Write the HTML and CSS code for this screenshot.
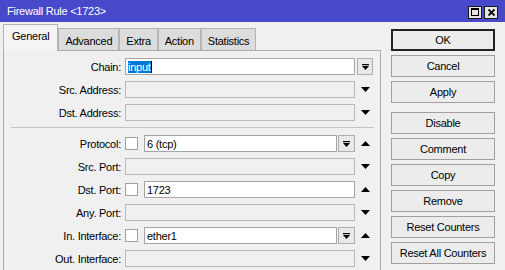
FILE: index.html
```html
<!DOCTYPE html>
<html>
<head>
<meta charset="utf-8">
<link rel="stylesheet" href="styles.css">
</head>
<body>
<div class="window">
  <div class="titlebar">
    <span class="title">Firewall Rule &lt;1723&gt;</span>
    <div class="tb-buttons">
      <span class="tb-btn"><span class="max-icon"></span></span>
      <span class="tb-btn">
        <svg width="7" height="7" viewBox="0 0 7 7"><path d="M0.5 0.5 L6.5 6.5 M6.5 0.5 L0.5 6.5" stroke="#000" stroke-width="1.8"/></svg>
      </span>
    </div>
  </div>
  <div class="content">
    <div class="left">
      <div class="tabs">
        <div class="tab active">General</div>
        <div class="tab">Advanced</div>
        <div class="tab">Extra</div>
        <div class="tab">Action</div>
        <div class="tab">Statistics</div>
      </div>
      <div class="panel">
        <div class="row">
          <span class="label">Chain:</span>
          <div class="ctrl"><div class="field"><span class="sel">input</span><span class="caret"></span></div></div>
          <div class="side"><span class="ddbtn side-dd"><svg width="7" height="6" viewBox="0 0 7 6"><rect x="0" y="0" width="7" height="1.2" fill="#000"/><path d="M0 2 H7 L3.5 6 Z" fill="#000"/></svg></span></div>
        </div>
        <div class="row">
          <span class="label">Src. Address:</span>
          <div class="ctrl"><div class="field empty"></div></div>
          <div class="side"><svg width="9" height="5" viewBox="0 0 9 5"><path d="M0 0 H9 L4.5 5 Z" fill="#000"/></svg></div>
        </div>
        <div class="row">
          <span class="label">Dst. Address:</span>
          <div class="ctrl"><div class="field empty"></div></div>
          <div class="side"><svg width="9" height="5" viewBox="0 0 9 5"><path d="M0 0 H9 L4.5 5 Z" fill="#000"/></svg></div>
        </div>
        <div class="sep"></div>
        <div class="row">
          <span class="label">Protocol:</span>
          <div class="ctrl"><span class="check"></span><div class="field">6 (tcp)</div><span class="ddbtn"><svg width="7" height="6" viewBox="0 0 7 6"><rect x="0" y="0" width="7" height="1.2" fill="#000"/><path d="M0 2 H7 L3.5 6 Z" fill="#000"/></svg></span></div>
          <div class="side"><svg width="9" height="5" viewBox="0 0 9 5"><path d="M0 5 H9 L4.5 0 Z" fill="#000"/></svg></div>
        </div>
        <div class="row">
          <span class="label">Src. Port:</span>
          <div class="ctrl"><div class="field empty"></div></div>
          <div class="side"><svg width="9" height="5" viewBox="0 0 9 5"><path d="M0 0 H9 L4.5 5 Z" fill="#000"/></svg></div>
        </div>
        <div class="row">
          <span class="label">Dst. Port:</span>
          <div class="ctrl"><span class="check"></span><div class="field">1723</div></div>
          <div class="side"><svg width="9" height="5" viewBox="0 0 9 5"><path d="M0 5 H9 L4.5 0 Z" fill="#000"/></svg></div>
        </div>
        <div class="row">
          <span class="label">Any. Port:</span>
          <div class="ctrl"><div class="field empty"></div></div>
          <div class="side"><svg width="9" height="5" viewBox="0 0 9 5"><path d="M0 0 H9 L4.5 5 Z" fill="#000"/></svg></div>
        </div>
        <div class="row">
          <span class="label">In. Interface:</span>
          <div class="ctrl"><span class="check"></span><div class="field">ether1</div><span class="ddbtn"><svg width="7" height="6" viewBox="0 0 7 6"><rect x="0" y="0" width="7" height="1.2" fill="#000"/><path d="M0 2 H7 L3.5 6 Z" fill="#000"/></svg></span></div>
          <div class="side"><svg width="9" height="5" viewBox="0 0 9 5"><path d="M0 5 H9 L4.5 0 Z" fill="#000"/></svg></div>
        </div>
        <div class="row">
          <span class="label">Out. Interface:</span>
          <div class="ctrl"><div class="field empty"></div></div>
          <div class="side"><svg width="9" height="5" viewBox="0 0 9 5"><path d="M0 0 H9 L4.5 5 Z" fill="#000"/></svg></div>
        </div>
      </div>
    </div>
    <div class="actions">
      <div class="btn default">OK</div>
      <div class="btn">Cancel</div>
      <div class="btn">Apply</div>
      <div class="btn group">Disable</div>
      <div class="btn">Comment</div>
      <div class="btn">Copy</div>
      <div class="btn">Remove</div>
      <div class="btn">Reset Counters</div>
      <div class="btn">Reset All Counters</div>
    </div>
  </div>
</div>
</body>
</html>
```

FILE: styles.css
```css
* { box-sizing: border-box; }
html, body { margin: 0; padding: 0; }
body {
  width: 505px;
  height: 270px;
  overflow: hidden;
  background: #f0f0f0;
  font-family: "Liberation Sans", Arial, sans-serif;
  font-size: 11px;
  letter-spacing: -0.25px;
  color: #000;
}
.titlebar {
  height: 22px;
  background: #4848cb;
  color: #fff;
  display: flex;
  align-items: center;
  justify-content: space-between;
  padding: 0 7px 0 7px;
}
.title { font-size: 11px; }
.tb-buttons { display: flex; gap: 2px; margin-top: 2px; }
.tb-btn {
  width: 14px;
  height: 13px;
  border: 1px solid #1a1a1a;
  background: #e4e4e4;
  display: flex;
  align-items: center;
  justify-content: center;
}
.max-icon {
  width: 8px;
  height: 8px;
  border: 1px solid #000;
  border-top-width: 2px;
}
.content { display: flex; align-items: flex-start; }
.left { width: 378px; margin-left: 3px; }
.tabs { display: flex; height: 28px; align-items: flex-end; }
.tab {
  height: 22px;
  padding: 2px 6px 0;
  background: #dcdcdc;
  border: 1px solid #b4b4b4;
  border-bottom: none;
  display: flex;
  align-items: center;
}
.tab.active {
  height: 27px;
  margin-bottom: -1px;
  padding: 5px 8px 0;
  align-items: flex-start;
  background: #f4f4f4;
  position: relative;
  z-index: 1;
}
.panel {
  height: 230px;
  border: 1px solid #aaaaaa;
  border-bottom: none;
  background: #f0f0f0;
  padding-top: 7px;
}
.row {
  display: flex;
  align-items: center;
  height: 17px;
  margin-bottom: 6px;
}
.label {
  width: 117px;
  margin-right: 4px;
  text-align: right;
  white-space: nowrap;
}
.ctrl { width: 230px; height: 17px; display: flex; align-items: center; }
.side {
  width: 16px;
  margin-left: 2px;
  display: flex;
  justify-content: center;
  align-items: center;
  height: 17px;
}
.field {
  flex: 1;
  height: 17px;
  border: 1px solid #a5a5a5;
  background: #fff;
  padding-left: 2px;
  display: flex;
  align-items: center;
  white-space: nowrap;
}
.field.empty { background: #f0f0f0; border-color: #b9b9b9; }
.sel { background: #0078d7; color: #fff; line-height: 12px; }
.caret { width: 1px; height: 12px; background: #000; }
.check {
  width: 13px;
  height: 13px;
  border: 1px solid #a0a0a0;
  background: #fff;
  margin-right: 6px;
}
.ddbtn {
  width: 17px;
  height: 17px;
  margin-left: 1px;
  border: 1px solid #adadad;
  background: #e9e9e9;
  display: flex;
  align-items: center;
  justify-content: center;
}
.side-dd { width: 16px; margin-left: 0; }
.sep {
  height: 1px;
  background: #c4c4c4;
  margin: 1px 6px 7px 7px;
}
.actions {
  width: 104px;
  margin-left: 10px;
  margin-top: 7px;
  display: flex;
  flex-direction: column;
}
.btn {
  height: 22px;
  margin-bottom: 4px;
  border: 1px solid #a0a0a0;
  background: #ececec;
  display: flex;
  align-items: center;
  justify-content: center;
  white-space: nowrap;
}
.btn.default { border: 2px solid #222; }
.btn.group { margin-top: 5px; }
```
